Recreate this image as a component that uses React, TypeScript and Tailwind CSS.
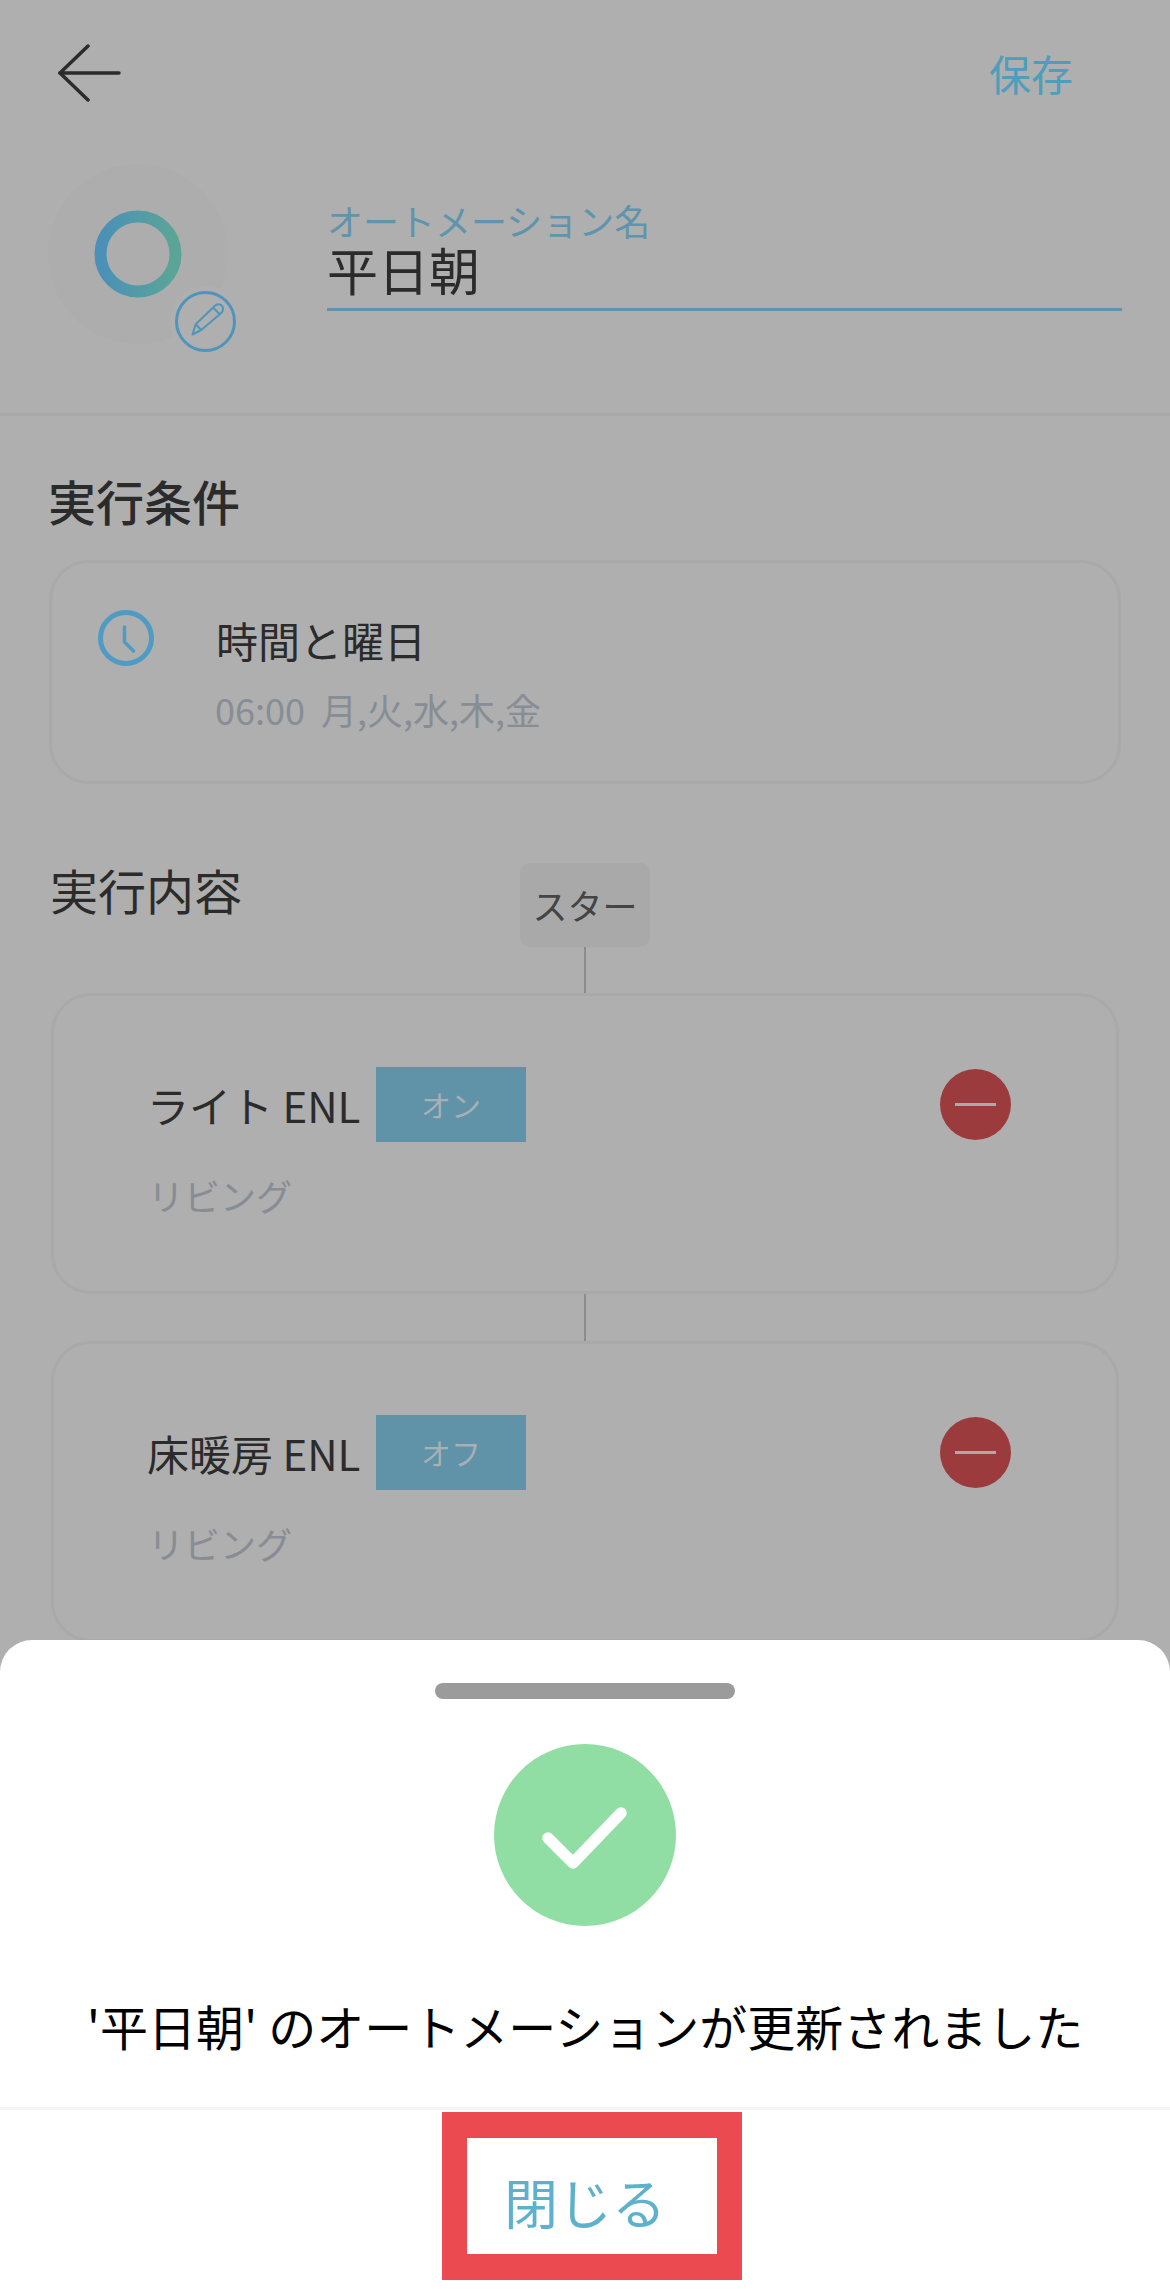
const jp = { fontFamily: '"Noto Sans CJK JP", "Noto Sans", sans-serif' };

function BackArrow() {
  return (
    <svg width="64" height="60" viewBox="0 0 64 60" fill="none" stroke="#2b2b2b" strokeWidth="3.5" strokeLinecap="round" strokeLinejoin="round">
      <path d="M30 2 2 29l28 27" />
      <path d="M2 29h59" />
    </svg>
  );
}

function Ring() {
  return (
    <svg width="88" height="88" viewBox="0 0 88 88" fill="none">
      <defs>
        <linearGradient id="ring" x1="0" y1="0" x2="1" y2="0">
          <stop offset="0" stopColor="#4a90b8" />
          <stop offset="1" stopColor="#5ba596" />
        </linearGradient>
      </defs>
      <circle cx="44" cy="44" r="37.5" stroke="url(#ring)" strokeWidth="12" />
    </svg>
  );
}

function Pencil() {
  return (
    <svg width="61" height="61" viewBox="0 0 61 61" fill="none" stroke="#4f95bb">
      <circle cx="30.5" cy="30.5" r="29" strokeWidth="3" />
      <path
        strokeWidth="2"
        strokeLinejoin="round"
        d="M17.5 43.5 20.7 33.3 40 14.7c2-2 5-2 6.6-.2 1.9 1.8 1.9 5 .2 6.9L26.3 39zM20.7 33.3l5.6 5.7M38.5 17l6.5 6.5"
      />
    </svg>
  );
}

function Clock() {
  return (
    <svg width="56" height="56" viewBox="0 0 56 56" fill="none" stroke="#4f9bc3" strokeLinecap="round" strokeLinejoin="round">
      <circle cx="28" cy="28" r="25.5" strokeWidth="5" />
      <path d="M26.5 17v15l9 9" strokeWidth="3.5" />
    </svg>
  );
}

function Check() {
  return (
    <svg width="90" height="76" viewBox="0 0 90 76" fill="none" stroke="#fff" strokeWidth="11.5" strokeLinecap="round" strokeLinejoin="round">
      <path d="M8 41 33 66 81 16" />
    </svg>
  );
}

function DeviceCard({ name, state }: { name: string; state: string }) {
  return (
    <div className="mx-[51px] h-[301px] rounded-[40px] border-[3px] border-[#a9a9a9] pt-[71px] pl-[93px] pr-[105px]">
      <div className="flex items-center">
        <div className="w-[212px] text-right text-[42px] leading-[75px] whitespace-nowrap text-[#2b2b2b]">{name}</div>
        <div className="ml-[17px] flex h-[75px] w-[150px] items-center justify-center bg-[#6092a8] text-[30px] text-[#a6b0b5]">
          {state}
        </div>
        <div className="ml-auto flex h-[71px] w-[71px] items-center justify-center rounded-full bg-[#9c3b3e]">
          <div className="h-[3px] w-[41px] bg-[#ababab]" />
        </div>
      </div>
      <div className="mt-[33px] pl-[1px] text-[36px] leading-[40px] text-[#878d94]">リビング</div>
    </div>
  );
}

export default function App() {
  return (
    <div className="relative h-[2289px] w-[1170px] overflow-hidden bg-[#afafaf]" style={jp}>
      <header className="flex h-[148px] items-center justify-between pl-[58px] pr-[97px]">
        <BackArrow />
        <span className="mb-[3px] text-[42px] text-[#4f9dba]">保存</span>
      </header>

      <section className="flex h-[268px] items-start border-b-[3px] border-[#a8a8a8] pl-[48px]">
        <div className="relative mt-[16px] flex h-[180px] w-[180px] items-center justify-center rounded-full bg-[#adadad]">
          <Ring />
          <div className="absolute left-[122px] top-[122px] rounded-full bg-[#afafaf] p-[5px]">
            <Pencil />
          </div>
        </div>
        <div className="ml-[99px] mt-[52px] h-[111px] w-[795px] border-b-[3px] border-[#5f94ac] pt-[2px]">
          <div className="text-[36px] leading-[36px] text-[#5f94ac]">オートメーション名</div>
          <div className="mt-[6px] text-[51px] leading-[50px] text-[#2b2b2b]">平日朝</div>
        </div>
      </section>

      <section className="px-[49px] pt-[54px]">
        <h2 className="-ml-[1px] text-[48px] font-medium leading-[60px] text-[#2b2b2b]">実行条件</h2>
        <div className="mt-[30px] flex h-[224px] rounded-[40px] border-[3px] border-[#a9a9a9] pl-[46px] pt-[47px]">
          <Clock />
          <div className="ml-[63px]">
            <div className="-ml-[1px] text-[42px] leading-[60px] text-[#2b2b2b]">時間と曜日</div>
            <div className="-ml-[2px] mt-[14px] text-[36px] leading-[50px] whitespace-pre text-[#878d94]">06:00  月,火,水,木,金</div>
          </div>
        </div>
      </section>

      <section className="grid grid-cols-[1fr_130px_1fr] px-[51px] pt-[79px]">
        <h2 className="-ml-[1px] -mt-[4px] text-[48px] leading-[60px] text-[#2b2b2b]">実行内容</h2>
        <div className="flex h-[84px] items-center justify-center rounded-[10px] bg-[#a9a9a9] text-[35px] text-[#444444]">
          スター
        </div>
      </section>
      <div className="mx-auto h-[46px] w-[2px] bg-[#8c8c8c]" />
      <DeviceCard name="ライト ENL" state="オン" />
      <div className="mx-auto h-[47px] w-[2px] bg-[#8c8c8c]" />
      <DeviceCard name="床暖房 ENL" state="オフ" />

      <div className="absolute inset-x-0 top-[1640px] bottom-0 flex flex-col items-center rounded-t-[32px] bg-white">
        <div className="mt-[43px] h-[16px] w-[300px] rounded-full bg-[#9b9b9b]" />
        <div className="mt-[45px] flex h-[182px] w-[182px] items-center justify-center rounded-full bg-[#90dea4]">
          <Check />
        </div>
        <p className="mt-[69px] text-[48px] leading-[60px] whitespace-nowrap text-black">'平日朝' のオートメーションが更新されました</p>
        <div className="mt-[52px] h-[3px] w-full bg-[#f5f5f5]" />
        <button className="mt-[57px] text-[54px] leading-[70px] text-[#5eb1cc]">閉じる</button>
        <div className="absolute left-[442px] top-[472px] h-[168px] w-[300px] border-x-[25px] border-y-[26px] border-[#eb4a50]" />
      </div>
    </div>
  );
}
